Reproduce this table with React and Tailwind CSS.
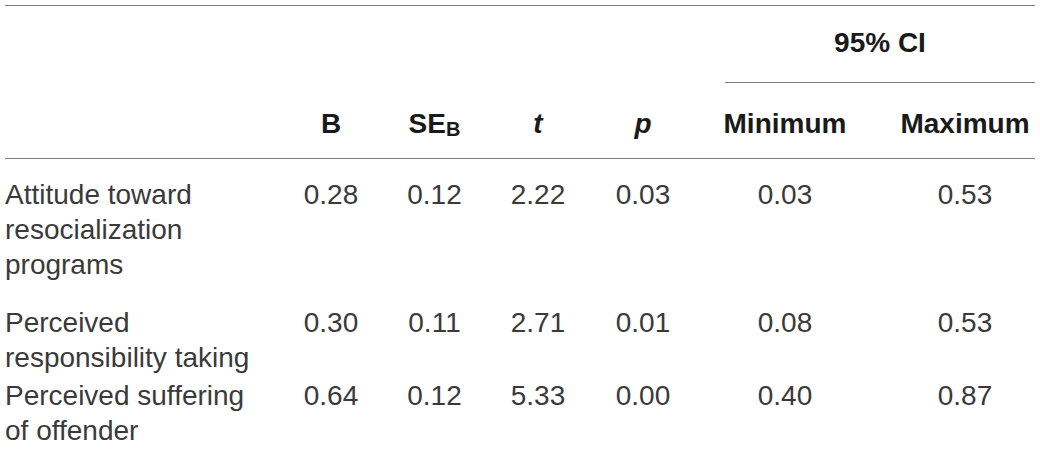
import React from "react";

const rows = [
    {
        label: "Attitude toward resocialization programs",
        b: "0.28",
        se: "0.12",
        t: "2.22",
        p: "0.03",
        min: "0.03",
        max: "0.53",
        pad: "pt-[18px] pb-[12px]",
    },
    {
        label: "Perceived responsibility taking",
        b: "0.30",
        se: "0.11",
        t: "2.71",
        p: "0.01",
        min: "0.08",
        max: "0.53",
        pad: "pt-[11px] pb-[2px]",
    },
    {
        label: "Perceived suffering of offender",
        b: "0.64",
        se: "0.12",
        t: "5.33",
        p: "0.00",
        min: "0.40",
        max: "0.87",
        pad: "pt-[1px] pb-[4px]",
    },
];

const cols = "grid grid-cols-[274px_104px_103px_104px_106px_178px_161px]";

export default function App() {
    return (
        <div className="w-[1040px] h-[462px] overflow-hidden bg-white pt-[5px] px-[5px] font-['Liberation_Sans',Arial,sans-serif] text-[28px] leading-[35px] text-[#3a3a3a]">
            <div className="w-[1030px] border-t border-[#7d7d7d]" />

            {/* header */}
            <div className={cols}>
                <div className="col-start-6 col-span-2 ml-[29px] pt-[19px] pb-[22px] border-b border-[#7d7d7d] text-center font-bold text-[#1a1a1a]">
                    95% CI
                </div>
            </div>
            <div className={`${cols} pt-[23px] pb-[17px] border-b border-[#7d7d7d] font-bold text-[#1a1a1a] text-center`}>
                <div />
                <div>B</div>
                <div>
                    SE<sub className="text-[20px] bottom-[-3px]">B</sub>
                </div>
                <div className="italic">t</div>
                <div className="italic">p</div>
                <div>Minimum</div>
                <div className="pl-[21px]">Maximum</div>
            </div>

            {/* body */}
            {rows.map((r) => (
                <div key={r.label} className={`${cols} ${r.pad} text-center`}>
                    <div className="w-[260px] text-left">{r.label}</div>
                    <div>{r.b}</div>
                    <div>{r.se}</div>
                    <div>{r.t}</div>
                    <div>{r.p}</div>
                    <div>{r.min}</div>
                    <div className="pl-[21px]">{r.max}</div>
                </div>
            ))}
        </div>
    );
}
